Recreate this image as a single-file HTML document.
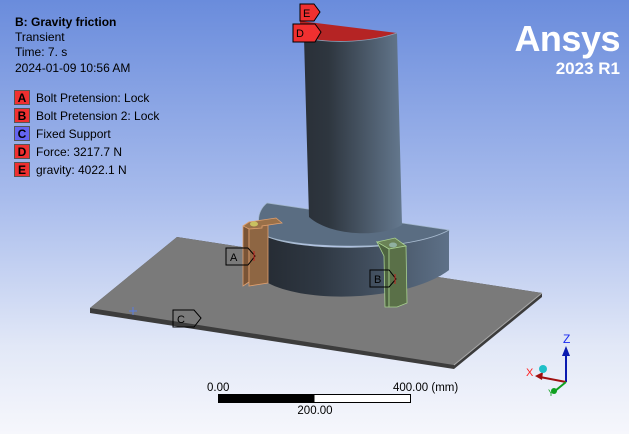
<!DOCTYPE html>
<html><head><meta charset="utf-8"><style>
html,body{margin:0;padding:0}
body{width:629px;height:434px;overflow:hidden;font-family:"Liberation Sans",sans-serif}
</style></head><body>
<svg width="629" height="434" viewBox="0 0 629 434" xmlns="http://www.w3.org/2000/svg" style="display:block">
<defs>
<linearGradient id="bg" x1="0" y1="0" x2="0" y2="1">
<stop offset="0" stop-color="#6a8cdc"/>
<stop offset="0.45" stop-color="#a7bbec"/>
<stop offset="0.8" stop-color="#e2e8f7"/>
<stop offset="1" stop-color="#f6f7fc"/>
</linearGradient>
<linearGradient id="col" x1="0" y1="0" x2="1" y2="0">
<stop offset="0" stop-color="#2a3038"/>
<stop offset="0.25" stop-color="#2e363f"/>
<stop offset="1" stop-color="#64788e"/>
</linearGradient>
<linearGradient id="front" x1="0" y1="0" x2="1" y2="0">
<stop offset="0" stop-color="#262c34"/>
<stop offset="0.3" stop-color="#2f3843"/>
<stop offset="1" stop-color="#5e7188"/>
</linearGradient>
</defs>
<rect width="629" height="434" fill="url(#bg)"/>
<!-- plate -->
<polygon points="177,237 542,293 542,297 454,369 90,313 90,308" fill="#3c3c3c"/>
<polygon points="177,237 542,293 454,365 90,308" fill="#7a7a7a"/>
<polyline points="454,365 542,293" stroke="#a9a9a9" stroke-width="1" fill="none"/>
<!-- base top -->
<path d="M267,203 L449,230 L449,232 C420,250 300,250 266,236 C256,228 256,212 267,203Z" fill="#5a6d82" stroke="#9fb3c8" stroke-width="0.7"/>
<polygon points="449,230 449,270 440,276 440,236" fill="#5f7288"/>
<path d="M266,236 C300,252 410,252 449,230 L449,270 C410,300 310,305 268,283 Z" fill="url(#front)"/>
<path d="M266,236 C300,252 410,252 449,230" stroke="#a8bbd0" stroke-width="0.8" fill="none"/>
<!-- column -->
<path d="M304,38 C335,44 370,42 397,33 L402,225 C380,238 330,236 309,217 Z" fill="url(#col)"/>
<path d="M300,21 L397,33 C370,42 335,44 304,38 L300,36Z" fill="#b52424"/>
<path d="M304,38 C335,44 370,42 397,33" stroke="#8aa0b8" stroke-width="0.8" fill="none"/>
<!-- bracket A -->
<polygon points="243,226 249,222 249,282 243,286" fill="#7a5436" stroke="#e0a070" stroke-width="0.8"/>
<polygon points="249,222 268,220 268,283 249,286" fill="#8e6643" stroke="#e0a070" stroke-width="0.8"/>
<polygon points="243,226 249,222 276,218 282,223 262,226 262,228 249,229" fill="#9a7048" stroke="#e0a070" stroke-width="0.8"/>
<ellipse cx="254" cy="224" rx="4" ry="2.5" fill="#c8c060"/>
<!-- bracket B -->
<polygon points="377,242 395,238 406,246 389,249" fill="#6a8256" stroke="#a8d090" stroke-width="0.8"/>
<polygon points="377,242 389,249 389,307 385,307 384,256" fill="#4e6440" stroke="#a8d090" stroke-width="0.8"/>
<polygon points="389,249 406,246 407,303 397,307 389,307" fill="#5a7048" stroke="#a8d090" stroke-width="0.8"/>
<ellipse cx="393" cy="245" rx="4" ry="2.5" fill="#90b0a0"/>
<!-- plate marker -->
<path d="M133,307 v8 M129,311 h8" stroke="#5a7ce0" stroke-width="1"/>
<!-- labels -->
<g font-size="11" font-family="Liberation Sans,sans-serif">
<polygon points="226,248 248,248 255,256 248,265 226,265" fill="none" stroke="#000" stroke-width="1"/>
<line x1="254" y1="251" x2="254" y2="261" stroke="#c02020"/>
<text x="230" y="261" fill="#000">A</text>
<polygon points="370,270 389,270 396,279 389,287 370,287" fill="none" stroke="#000" stroke-width="1"/>
<line x1="395" y1="274" x2="395" y2="284" stroke="#c02020"/>
<text x="374" y="283" fill="#000">B</text>
<polygon points="173,310 194,310 201,318 194,327 173,327" fill="none" stroke="#000" stroke-width="1"/>
<text x="177" y="323" fill="#000">C</text>
<polygon points="300,4 314,4 320,12 314,21 300,21" fill="#f03030" stroke="#000" stroke-width="1"/>
<text x="303" y="17" fill="#000">E</text>
<polygon points="293,24 315,24 321,32 315,42 293,42" fill="#f03030" stroke="#000" stroke-width="1"/>
<text x="296" y="37" fill="#000">D</text>
</g>
<!-- legend -->
<g font-size="12" fill="#000">
<text x="15" y="26" font-weight="bold">B: Gravity friction</text>
<text x="15" y="41">Transient</text>
<text x="15" y="56">Time: 7. s</text>
<text x="15" y="72">2024-01-09 10:56 AM</text>
<g stroke="#555" stroke-width="1">
<rect x="14.5" y="90.5" width="15" height="14" fill="#f03030"/>
<rect x="14.5" y="108.5" width="15" height="14" fill="#f03030"/>
<rect x="14.5" y="126.5" width="15" height="14" fill="#6464f0"/>
<rect x="14.5" y="144.5" width="15" height="14" fill="#f03030"/>
<rect x="14.5" y="162.5" width="15" height="14" fill="#f03030"/>
</g>
<g font-size="12" font-weight="bold" text-anchor="middle">
<text x="22" y="102">A</text><text x="22" y="120">B</text><text x="22" y="138">C</text><text x="22" y="156">D</text><text x="22" y="174">E</text>
</g>
<text x="36" y="102">Bolt Pretension: Lock</text>
<text x="36" y="120">Bolt Pretension 2: Lock</text>
<text x="36" y="138">Fixed Support</text>
<text x="36" y="156">Force: 3217.7 N</text>
<text x="36" y="174">gravity: 4022.1 N</text>
</g>
<!-- logo -->
<text x="620" y="51" text-anchor="end" font-size="36" font-weight="bold" fill="#fff" letter-spacing="-0.5">Ansys</text>
<text x="620" y="74" text-anchor="end" font-size="17" font-weight="bold" fill="#fff">2023 R1</text>
<!-- scale bar -->
<g font-size="11.5" fill="#000">
<text x="207" y="391">0.00</text>
<text x="393" y="391">400.00 (mm)</text>
<text x="315" y="414" text-anchor="middle">200.00</text>
</g>
<rect x="218.5" y="394.5" width="192" height="8" fill="#fff" stroke="#000"/>
<rect x="218.5" y="394.5" width="96" height="8" fill="#000"/>
<!-- triad -->
<line x1="566" y1="382" x2="566" y2="355" stroke="#0a1ab0" stroke-width="2"/>
<polygon points="566,346 562,356 570,356" fill="#0a1ab0"/>
<text x="563" y="343" font-size="12" fill="#1a2af0">Z</text>
<line x1="566" y1="382" x2="540" y2="377" stroke="#a01010" stroke-width="2"/>
<polygon points="535,376 543,372 542,380" fill="#a01010"/>
<text x="526" y="376" font-size="11" fill="#ff2020">X</text>
<line x1="566" y1="382" x2="555" y2="391" stroke="#10a020" stroke-width="2"/>
<circle cx="554" cy="391" r="3" fill="#10a020"/>
<text x="548" y="396" font-size="9" fill="#10a020">Y</text>
<circle cx="543" cy="369" r="4" fill="#20c0c8"/>
</svg>
</body></html>
